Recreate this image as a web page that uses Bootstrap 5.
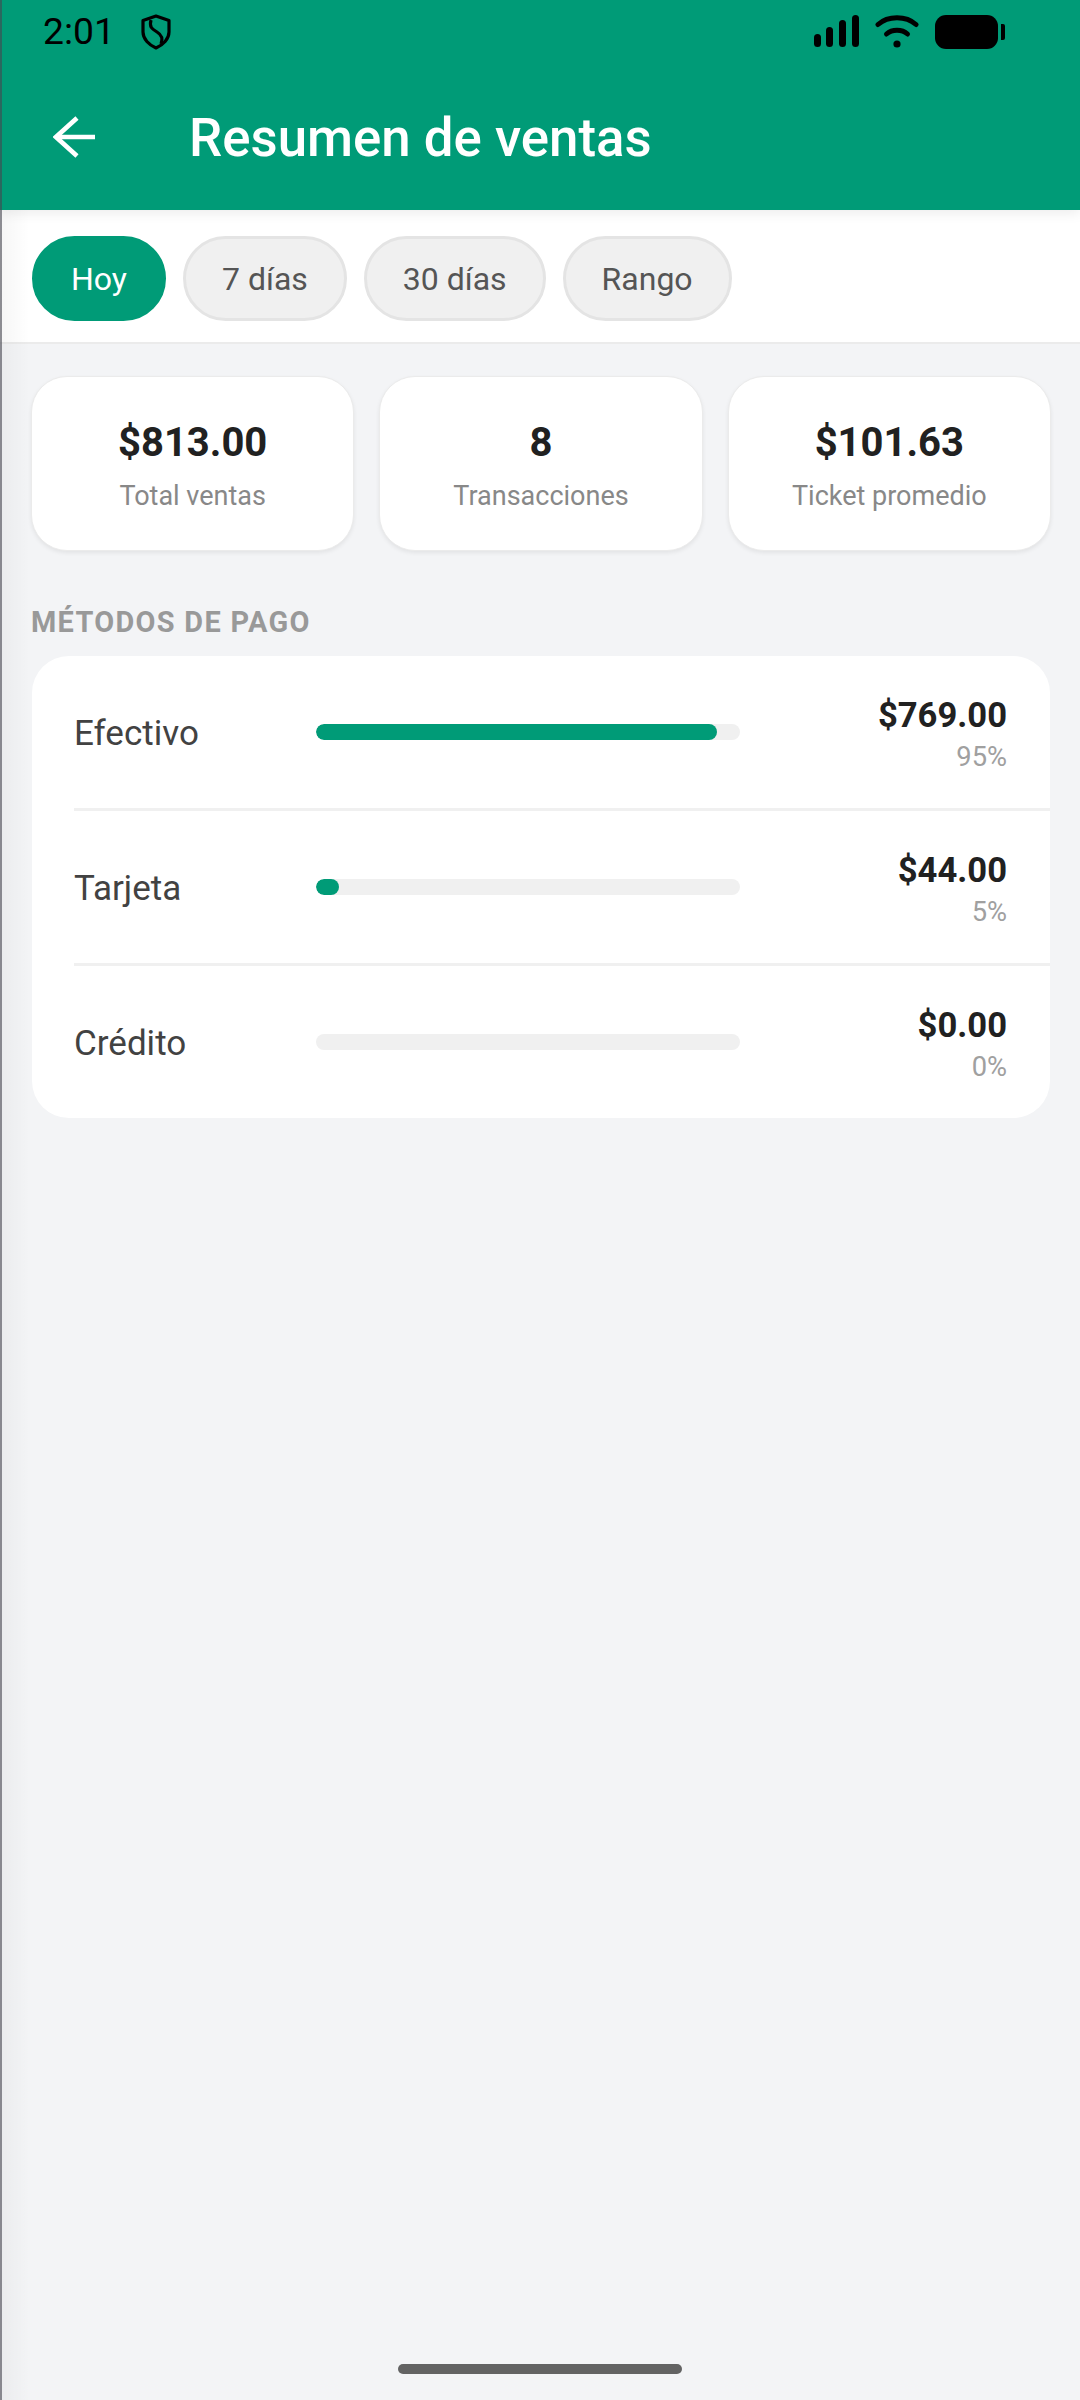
<!DOCTYPE html>
<html lang="es">
<head>
    <meta charset="UTF-8">
    <meta name="viewport" content="width=device-width, initial-scale=1.0">
    <title>Resumen de ventas</title>
    <link href="https://cdn.jsdelivr.net/npm/bootstrap@5.3.0/dist/css/bootstrap.min.css" rel="stylesheet">
    <style>
        html, body {
            height: 2400px;
            overflow: hidden;
        }
        body {
            background-color: #f3f4f6;
            font-family: Roboto, "Liberation Sans", sans-serif;
        }
        .screen {
            height: 2400px;
            position: relative;
        }
        /* thin dark edge on the left, with a soft fade below the header */
        .screen::before {
            content: "";
            position: absolute;
            left: 0;
            top: 0;
            bottom: 0;
            width: 2px;
            background: rgba(70, 70, 80, .6);
            z-index: 5;
        }
        .screen::after {
            content: "";
            position: absolute;
            left: 0;
            top: 210px;
            bottom: 0;
            width: 30px;
            background: linear-gradient(to right, rgba(0, 0, 0, .035), rgba(0, 0, 0, 0));
            z-index: 4;
            pointer-events: none;
        }
        .app-head {
            background-color: #009b77;
            height: 210px;
            box-shadow: 0 3px 12px rgba(0, 0, 0, .08);
            position: relative;
        }
        .status-row {
            height: 63px;
            padding-left: 43px;
            padding-right: 75px;
        }
        .status-time {
            font-size: 37.3px;
            color: #000;
            width: 98px;
            line-height: 1;
        }
        .tool-row {
            height: 147px;
            padding-left: 53px;
        }
        .tool-title {
            font-size: 52.8px;
            font-weight: 500;
            color: #fff;
            margin-left: 94px;
            margin-top: 4px;
            line-height: 1;
        }
        .tab-strip {
            background-color: #fff;
            padding: 26px 32px 21px;
            gap: 17px;
            border-bottom: 2px solid #ebebeb;
        }
        .tab-pill {
            height: 85px;
            padding: 0 36px;
            border-radius: 43px;
            font-size: 32px;
            color: #555;
            background-color: #f0f0f0;
            border: 3px solid #e4e4e4;
        }
        .tab-pill.is-on {
            background-color: #009b77;
            border-color: #009b77;
            color: #fff;
        }
        .stat-row {
            padding: 32px 29px 0 31px;
            gap: 25px;
        }
        .stat-box {
            flex: 1 1 0;
            height: 175px;
            padding-top: 4px;
            background-color: #fff;
            border: 1px solid #ebebeb;
            border-radius: 36px;
            box-shadow: 0 2px 4px rgba(0, 0, 0, .07);
        }
        .stat-num {
            font-size: 40px;
            font-weight: 700;
            color: #212121;
            line-height: 1.2;
        }
        .stat-label {
            font-size: 27px;
            color: #888;
            line-height: 1.2;
            margin-top: 13px;
        }
        .section-label {
            font-size: 28.9px;
            font-weight: 700;
            letter-spacing: 1.3px;
            color: #999;
            padding-left: 31px;
            margin-top: 55px;
            line-height: 33px;
            height: 50px;
        }
        .pay-box {
            margin: 0 30px 0 32px;
            background-color: #fff;
            border-radius: 37px;
            overflow: hidden;
        }
        .pay-row {
            height: 155px;
            margin-left: 42px;
            padding-right: 43px;
            border-bottom: 3px solid #f0f0f0;
        }
        .pay-row:last-child {
            border-bottom: 0;
            height: 152px;
        }
        .pay-name {
            width: 242px;
            font-size: 35px;
            color: #424242;
            margin-top: 4px;
        }
        .pay-track {
            width: 424px;
            height: 16px;
            border-radius: 8px;
            background-color: #f0f0f0;
        }
        .pay-fill {
            background-color: #009b77;
            border-radius: 8px;
        }
        .pay-value {
            margin-top: 5px;
        }
        .pay-amount {
            font-size: 34.6px;
            font-weight: 700;
            color: #212121;
            line-height: 1.2;
        }
        .pay-pct {
            font-size: 27.3px;
            color: #a0a0a0;
            line-height: 1.2;
            margin-top: 4px;
        }
        .home-bar {
            position: absolute;
            left: 398px;
            top: 2364px;
            width: 284px;
            height: 10px;
            border-radius: 5px;
            background-color: #636363;
        }
    </style>
</head>
<body>
    <div class="screen">
        <header class="app-head">
            <div class="status-row d-flex align-items-center">
                <span class="status-time">2:01</span>
                <svg width="30" height="36" viewBox="0 0 30 36" fill="none" stroke="#000" stroke-width="3.2">
                    <path d="M15 2 L28 6.5 V18 C28 25 22 31 15 34 C8 31 2 25 2 18 V6.5 Z" stroke-linejoin="round"/>
                    <path d="M10 6 C8 13 11 15 16 18 C21 21 22 25 20 30"/>
                </svg>
                <div class="ms-auto d-flex align-items-center">
                    <svg width="45" height="34" viewBox="0 0 45 34" fill="#000">
                        <rect x="0" y="19" width="7" height="13" rx="3.5"/>
                        <rect x="12" y="12" width="7" height="20" rx="3.5"/>
                        <rect x="25" y="5" width="7" height="27" rx="3.5"/>
                        <rect x="38" y="0" width="7" height="32" rx="3.5"/>
                    </svg>
                    <svg class="ms-3" width="44" height="34" viewBox="0 0 44 34" fill="none" stroke="#000" stroke-width="5" stroke-linecap="round">
                        <path d="M3 9.5 C13 0.5 31 0.5 41 9.5"/>
                        <path d="M11.5 19 C17 14 27 14 32.5 19"/>
                        <circle cx="22" cy="29" r="3.6" fill="#000" stroke="none"/>
                    </svg>
                    <svg class="ms-3" width="70" height="34" viewBox="0 0 70 34" fill="#000">
                        <rect x="0" y="0" width="63" height="34" rx="11"/>
                        <path d="M66 9 h2 a2 2 0 0 1 2 2 v12 a2 2 0 0 1 -2 2 h-2 z"/>
                    </svg>
                </div>
            </div>
            <div class="tool-row d-flex align-items-center">
                <svg width="42" height="42" viewBox="0 0 42 42" fill="none" stroke="#fff" stroke-width="4.6">
                    <path d="M42 21 H3"/>
                    <path d="M24 2 L3 21 L24 40" stroke-linejoin="miter"/>
                </svg>
                <div class="tool-title">Resumen de ventas</div>
            </div>
        </header>

        <div class="tab-strip d-flex">
            <div class="tab-pill is-on d-flex align-items-center">Hoy</div>
            <div class="tab-pill d-flex align-items-center">7 días</div>
            <div class="tab-pill d-flex align-items-center">30 días</div>
            <div class="tab-pill d-flex align-items-center">Rango</div>
        </div>

        <div class="stat-row d-flex">
            <div class="stat-box d-flex flex-column align-items-center justify-content-center">
                <div class="stat-num">$813.00</div>
                <div class="stat-label">Total ventas</div>
            </div>
            <div class="stat-box d-flex flex-column align-items-center justify-content-center">
                <div class="stat-num">8</div>
                <div class="stat-label">Transacciones</div>
            </div>
            <div class="stat-box d-flex flex-column align-items-center justify-content-center">
                <div class="stat-num">$101.63</div>
                <div class="stat-label">Ticket promedio</div>
            </div>
        </div>

        <div class="section-label">MÉTODOS DE PAGO</div>

        <div class="pay-box">
            <div class="pay-row d-flex align-items-center">
                <div class="pay-name">Efectivo</div>
                <div class="progress pay-track"><div class="progress-bar pay-fill" style="width: 94.6%"></div></div>
                <div class="pay-value ms-auto text-end">
                    <div class="pay-amount">$769.00</div>
                    <div class="pay-pct">95%</div>
                </div>
            </div>
            <div class="pay-row d-flex align-items-center">
                <div class="pay-name">Tarjeta</div>
                <div class="progress pay-track"><div class="progress-bar pay-fill" style="width: 5.4%"></div></div>
                <div class="pay-value ms-auto text-end">
                    <div class="pay-amount">$44.00</div>
                    <div class="pay-pct">5%</div>
                </div>
            </div>
            <div class="pay-row d-flex align-items-center">
                <div class="pay-name">Crédito</div>
                <div class="progress pay-track"><div class="progress-bar pay-fill" style="width: 0%"></div></div>
                <div class="pay-value ms-auto text-end">
                    <div class="pay-amount">$0.00</div>
                    <div class="pay-pct">0%</div>
                </div>
            </div>
        </div>

        <div class="home-bar"></div>
    </div>
    <script src="https://cdn.jsdelivr.net/npm/bootstrap@5.3.0/dist/js/bootstrap.bundle.min.js"></script>
</body>
</html>
